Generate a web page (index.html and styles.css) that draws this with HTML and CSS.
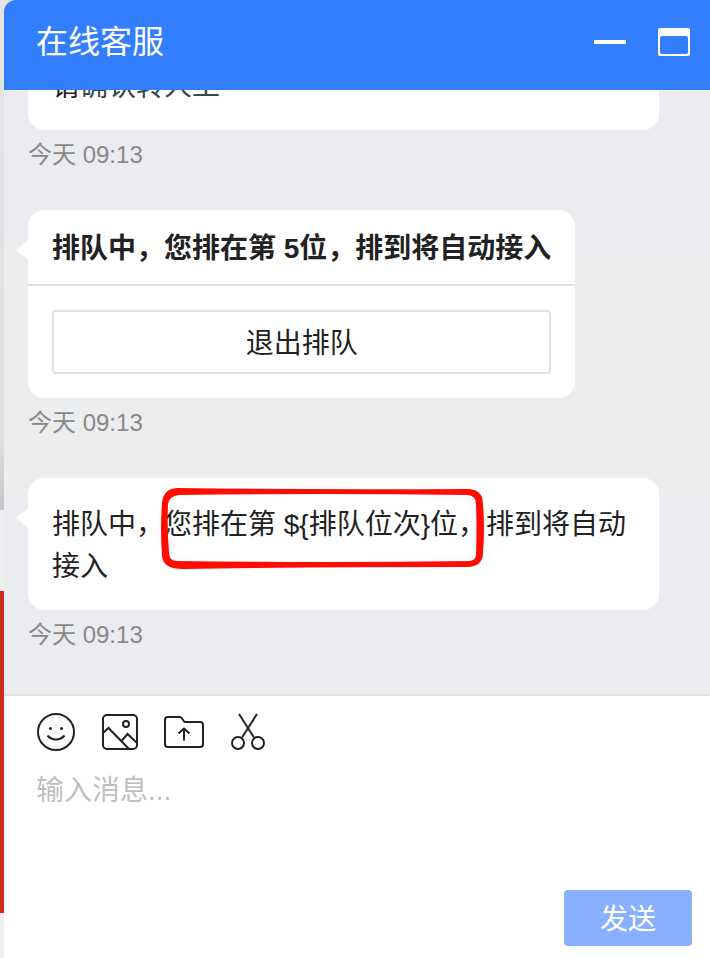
FILE: index.html
```html
<!DOCTYPE html>
<html lang="zh">
<head>
  <meta charset="UTF-8">
  <meta name="viewport" content="width=device-width, initial-scale=1">
  <title>在线客服</title>
  <link rel="stylesheet" href="styles.css">
</head>
<body>

  <div class="chat">
    <header class="chat-header">
      <h1>在线客服</h1>
      <div class="window-btns">
        <button type="button" class="icon-btn" aria-label="最小化">
          <svg width="32" height="28" viewBox="0 0 32 28"><rect y="12" width="32" height="4" fill="#fff"/></svg>
        </button>
        <button type="button" class="icon-btn" aria-label="最大化">
          <svg width="32" height="28" viewBox="0 0 32 28">
            <path fill="#fff" fill-rule="evenodd" d="M2 0H30Q32 0 32 2V26Q32 28 30 28H2Q0 28 0 26V2Q0 0 2 0ZM4 8Q2 8 2 10V24Q2 26 4 26H28Q30 26 30 24V10Q30 8 28 8Z"/>
          </svg>
        </button>
      </div>
    </header>

    <main class="message-list">
      <div class="message">
        <div class="bubble bubble-wide">
          <p>请<span class="keyword">确认转人工</span></p>
        </div>
        <time>今天 09:13</time>
      </div>

      <div class="message">
        <div class="card arrow">
          <h2>排队中，您排在第 5位，排到将自动接入</h2>
          <div class="card-body">
            <button type="button" class="quit-btn">退出排队</button>
          </div>
        </div>
        <time>今天 09:13</time>
      </div>

      <div class="message">
        <div class="bubble bubble-wide arrow">
          <p>排队中，您排在第 ${排队位次}位，排到将自动接入</p>
          <!-- 红框标注 -->
          <svg class="mark" width="323" height="81" viewBox="0 0 323 81">
            <path fill="#ff0d00" fill-rule="evenodd" d="M16 0Q160 2 306 1Q322 1 322 16Q324 40 322 66Q321 78 308 79Q160 79 22 81Q2 81 1 68Q-1 40 1 15Q2 1 16 0ZM18 7Q160 5 305 7Q315 7 315 16Q316 40 315 66Q315 72 309 73Q160 75 16 73Q8 73 8 64Q6 40 7 16Q8 8 18 7Z"/>
          </svg>
        </div>
        <time>今天 09:13</time>
      </div>
    </main>

    <form class="editor">
      <div class="toolbar">
        <button type="button" class="icon-btn" aria-label="表情">
          <svg class="tool-icon" width="40" height="40" viewBox="0 0 40 40">
            <circle cx="20" cy="20" r="18"/>
            <path d="M11.500 23.500Q15 27.500 20 27.500T28.500 23.500"/>
            <circle cx="14.500" cy="16.500" r="1.500" class="solid"/>
            <circle cx="25.500" cy="16.500" r="1.500" class="solid"/>
          </svg>
        </button>
        <button type="button" class="icon-btn" aria-label="图片">
          <svg class="tool-icon" width="40" height="40" viewBox="0 0 40 40">
            <rect x="3" y="3" width="34" height="34" rx="4"/>
            <circle cx="26" cy="12" r="3"/>
            <path d="M3 21L8.500 16L29 37M21.500 29L27.500 22L37 31"/>
          </svg>
        </button>
        <button type="button" class="icon-btn" aria-label="文件">
          <svg class="tool-icon" width="40" height="40" viewBox="0 0 40 40">
            <path d="M4 5H15.500Q17 5 18 6.500L20.500 10H36Q39 10 39 13V32Q39 35 36 35H4Q1 35 1 32V8Q1 5 4 5Z"/>
            <path d="M20 28.500V16.500M14.500 21.500L20 16.500L25.500 21.500"/>
          </svg>
        </button>
        <button type="button" class="icon-btn" aria-label="截图">
          <svg class="tool-icon" width="40" height="40" viewBox="0 0 40 40">
            <path d="M11 2L26 25.500M29 2L14 25.500"/>
            <circle cx="10" cy="31" r="6"/>
            <circle cx="30" cy="31" r="6"/>
          </svg>
        </button>
      </div>
      <textarea class="message-input" aria-label="输入消息" placeholder="输入消息..."></textarea>
      <button type="submit" class="send-btn">发送</button>
    </form>
  </div>

</body>
</html>
```
FILE: styles.css
```css
* {
  box-sizing: border-box;
}

body {
  margin: 0;
  padding-left: 4px;
  font-family: "Liberation Sans", "Noto Sans CJK SC", sans-serif;
  font-size: 28px;
  line-height: 42px;
  color: #222;
  background: linear-gradient(#e3e3e2 0, #e0e0df 440px, #c4c4c4 510px, #efefed 510px, #efefed 591px, #cf2a20 591px, #cf2a20 913px, #efefef 913px);
}

h1,
h2,
p {
  margin: 0;
}

button,
textarea {
  font: inherit;
  color: inherit;
}

button {
  padding: 0;
  cursor: pointer;
}

svg {
  display: block;
}

.chat {
  display: flex;
  flex-direction: column;
  height: 100vh;
}

.chat-header {
  display: flex;
  justify-content: space-between;
  align-items: center;
  flex: none;
  padding: 21px 20px 27px 32px;
  color: #fff;
  background-color: #337eff;
  border-top-left-radius: 12px;
}

.chat-header h1 {
  font-size: 32px;
  font-weight: normal;
}

.window-btns {
  display: flex;
  gap: 32px;
}

.icon-btn {
  border: none;
  background: none;
}

.message-list {
  display: flex;
  flex-direction: column;
  justify-content: flex-end;
  gap: 30px;
  flex: 1;
  min-height: 0;
  overflow: hidden;
  padding: 0 51px 34px 24px;
  background: linear-gradient(#ebecf0 158px, #ecedef 160px, #ecedef 412px, #ebecf0 414px);
}

.message {
  display: flex;
  flex-direction: column;
  align-items: flex-start;
  flex: none;
}

.bubble,
.card {
  position: relative;
  background-color: #fff;
  border-radius: 16px;
}

.bubble {
  padding: 26px 24px 22px;
}

.bubble-wide {
  width: 100%;
}

.arrow::before {
  content: "";
  position: absolute;
  top: 30px;
  left: -12px;
  border: 10px solid transparent;
  border-left: none;
  border-right: 12px solid #fff;
}

.keyword {
  color: #37474f;
}

.card h2 {
  padding: 18px 24px 14px;
  font-size: 28px;
  border-bottom: 2px solid #e1e1e1;
}

.card-body {
  padding: 24px;
}

.quit-btn {
  display: block;
  width: 100%;
  height: 64px;
  padding-top: 4px;
  background-color: #fff;
  border: 2px solid #e1e1e1;
  border-radius: 4px;
}

.message time {
  font-size: 24px;
  line-height: 50px;
  color: #888;
}

.mark {
  position: absolute;
  top: 10px;
  left: 133px;
}

.editor {
  display: flex;
  flex-direction: column;
  flex: none;
  padding: 16px 18px 12px 32px;
  background-color: #fff;
  border-top: 2px solid #e1e3e6;
}

.toolbar {
  display: flex;
  gap: 24px;
}

.tool-icon {
  fill: none;
  stroke: #222;
  stroke-width: 2;
}

.tool-icon .solid {
  fill: #222;
  stroke: none;
}

.message-input {
  height: 114px;
  margin: 18px 0 6px;
  padding: 0;
  border: none;
  outline: none;
  resize: none;
}

.message-input::placeholder {
  color: #bfbfbf;
}

.send-btn {
  align-self: flex-end;
  width: 128px;
  height: 56px;
  padding-top: 4px;
  color: #fff;
  background-color: #88b0ff;
  border: none;
  border-radius: 4px;
}
```
